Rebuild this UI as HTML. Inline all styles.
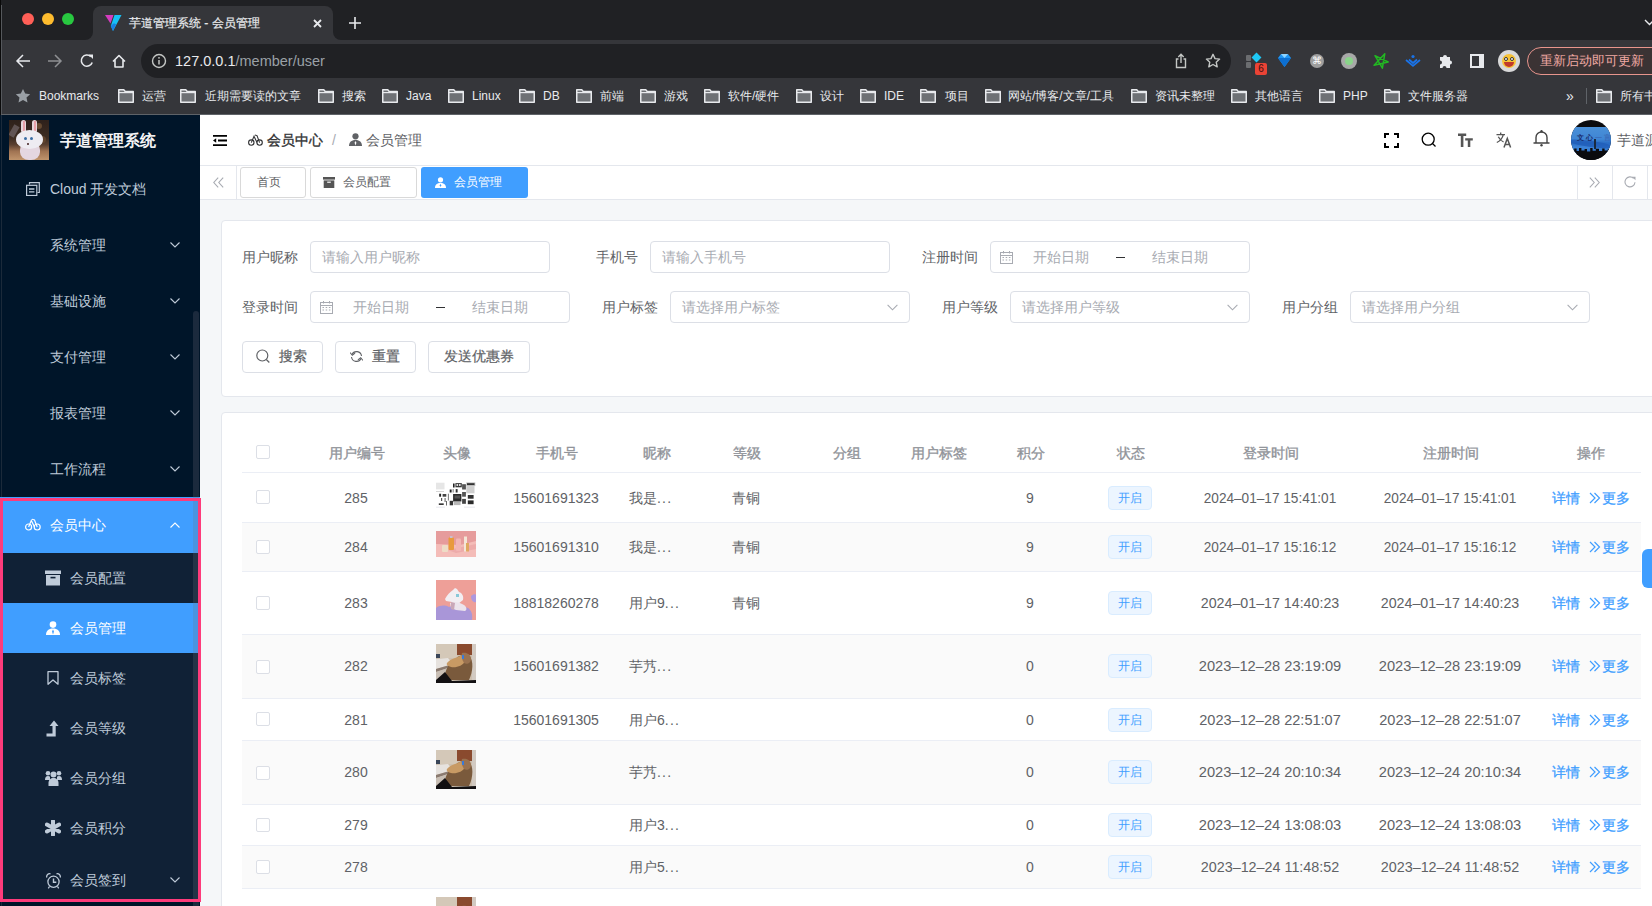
<!DOCTYPE html>
<html><head><meta charset="utf-8">
<style>
*{box-sizing:border-box;margin:0;padding:0}
html,body{width:1652px;height:906px;overflow:hidden;background:#f5f7f9;font-family:"Liberation Sans",sans-serif}
.a{position:absolute}
svg{display:block}
/* chrome */
#tabstrip{left:0;top:0;width:1652px;height:40px;background:#202124}
#toolbar{left:0;top:40px;width:1652px;height:75px;background:#35363a}
.tl{width:12px;height:12px;border-radius:50%;top:13px}
.bm{top:88px;height:16px;font-size:12px;line-height:16px;color:#e8eaed;white-space:nowrap}
.fold{top:89px;width:16px;height:14px}
/* sidebar */
#side{left:0;top:115px;width:200px;height:791px;background:#001529;overflow:hidden}
.mi{left:0;width:200px;font-size:14px;color:#bfcbd9;white-space:nowrap}
.mt{position:absolute;top:0;line-height:56px}
.chev{position:absolute;width:10px;height:6px}
/* header */
#hdr{left:200px;top:115px;width:1452px;height:51px;background:#fff;border-bottom:1px solid #eee}
#tags{left:200px;top:166px;width:1452px;height:34px;background:#fff;border-bottom:1px solid #e4e7ed}
.card{background:#fff;border:1px solid #e4e7ed;border-radius:4px}
.lbl{font-size:14px;color:#606266;line-height:32px;height:32px;text-align:right;white-space:nowrap}
.inp{height:32px;border:1px solid #dcdfe6;border-radius:4px;background:#fff;font-size:14px;color:#a8abb2;line-height:30px;white-space:nowrap}
.btn{height:32px;border:1px solid #dcdfe6;border-radius:4px;background:#fff;font-size:14px;color:#606266;line-height:30px;white-space:nowrap}
.th{font-size:14px;color:#909399;-webkit-text-stroke:0.35px #909399;line-height:20px;white-space:nowrap}
.td{font-size:14px;color:#606266;line-height:20px;white-space:nowrap}
.cb{width:14px;height:14px;border:1px solid #dcdfe6;border-radius:2px;background:#fff}
.tag{width:44px;height:24px;border:1px solid #d9ecff;background:#ecf5ff;border-radius:4px;color:#409eff;font-size:12px;line-height:22px;text-align:center}
.lnk{font-size:14px;color:#409eff;-webkit-text-stroke:0.25px #409eff;line-height:20px;white-space:nowrap}
</style></head>
<body>
<!-- ============ BROWSER CHROME ============ -->
<div id="tabstrip" class="a"></div>
<div class="a tl" style="left:22px;background:#ff5f57"></div>
<div class="a tl" style="left:42px;background:#febc2e"></div>
<div class="a tl" style="left:62px;background:#28c840"></div>
<!-- active tab -->
<div class="a" style="left:93px;top:6px;width:240px;height:40px;background:#35363a;border-radius:8px 8px 0 0"></div>
<div class="a" style="left:85px;top:32px;width:8px;height:8px;background:#35363a"></div>
<div class="a" style="left:77px;top:24px;width:16px;height:16px;background:#202124;border-radius:0 0 8px 0"></div>
<div class="a" style="left:333px;top:32px;width:8px;height:8px;background:#35363a"></div>
<div class="a" style="left:333px;top:24px;width:16px;height:16px;background:#202124;border-radius:0 0 0 8px"></div>
<svg class="a" style="left:104px;top:14px" width="18" height="18" viewBox="0 0 18 18"><path d="M1 1h8.5L6.5 9.5z" fill="#d43cbf"/><path d="M10.5 1h7L9 17 6.8 12z" fill="#16c0f5"/><path d="M6.8 12L9 17l3.2-6.8-2.4-1z" fill="#1a7fe0"/></svg>
<div class="a" style="left:129px;top:15px;font-size:12px;line-height:16px;color:#e8eaed;-webkit-text-stroke:0.2px #e8eaed;white-space:nowrap">芋道管理系统 - 会员管理</div>
<svg class="a" style="left:313px;top:19px" width="9" height="9" viewBox="0 0 9 9"><path d="M1 1L8 8M8 1L1 8" stroke="#e8eaed" stroke-width="1.8"/></svg>
<svg class="a" style="left:349px;top:17px" width="12" height="12" viewBox="0 0 12 12"><path d="M6 0V12M0 6H12" stroke="#e8eaed" stroke-width="1.6"/></svg>
<svg class="a" style="left:1644px;top:19px" width="10" height="7" viewBox="0 0 10 7"><path d="M1 1l4.5 4.5L10 1" stroke="#e8eaed" stroke-width="1.4" fill="none"/></svg>
<div id="toolbar" class="a"></div>
<!-- nav icons -->
<svg class="a" style="left:15px;top:53px" width="16" height="16" viewBox="0 0 16 16"><path d="M15 8H2M8 2L2 8l6 6" stroke="#e8eaed" stroke-width="1.5" fill="none"/></svg>
<svg class="a" style="left:47px;top:53px" width="16" height="16" viewBox="0 0 16 16"><path d="M1 8h13M8 2l6 6-6 6" stroke="#8e9093" stroke-width="1.5" fill="none"/></svg>
<svg class="a" style="left:79px;top:53px" width="16" height="16" viewBox="0 0 16 16"><path d="M13.2 9.5A5.6 5.6 0 1 1 11.8 3.6" stroke="#e8eaed" stroke-width="1.6" fill="none"/><path d="M9.5 1.5h4.5v4.5z" fill="#e8eaed"/></svg>
<svg class="a" style="left:111px;top:53px" width="16" height="16" viewBox="0 0 16 16"><path d="M2 8.5L8 2.5l6 6M4 7v7h8V7" stroke="#e8eaed" stroke-width="1.6" fill="none" stroke-linejoin="round"/></svg>
<!-- omnibox -->
<div class="a" style="left:141px;top:44px;width:1090px;height:34px;border-radius:17px;background:#202124"></div>
<svg class="a" style="left:151px;top:53px" width="16" height="16" viewBox="0 0 16 16"><circle cx="8" cy="8" r="6.5" stroke="#c4c7c5" stroke-width="1.4" fill="none"/><path d="M8 7v4.5" stroke="#c4c7c5" stroke-width="1.5"/><circle cx="8" cy="4.8" r="0.9" fill="#c4c7c5"/></svg>
<div class="a" style="left:175px;top:52px;font-size:14.5px;line-height:18px;color:#e8eaed;white-space:nowrap">127.0.0.1<span style="color:#9aa0a6">/member/user</span></div>
<svg class="a" style="left:1174px;top:53px" width="14" height="16" viewBox="0 0 14 16"><path d="M4.5 6H2.5v8.5h9V6h-2M7 10V1.5M4.3 4L7 1.3 9.7 4" stroke="#c4c7c5" stroke-width="1.4" fill="none"/></svg>
<svg class="a" style="left:1205px;top:53px" width="16" height="16" viewBox="0 0 16 16"><path d="M8 1.3l2 4.3 4.6.5-3.4 3.1 1 4.6L8 11.5l-4.2 2.3 1-4.6L1.4 6.1 6 5.6z" stroke="#c4c7c5" stroke-width="1.4" fill="none" stroke-linejoin="round"/></svg>
<!-- extensions -->
<div class="a" style="left:1246px;top:55px;width:5px;height:6px;background:#6b6d70;border-radius:1px"></div>
<div class="a" style="left:1246px;top:62px;width:5px;height:6px;background:#6b6d70;border-radius:1px"></div>
<div class="a" style="left:1253px;top:54px;width:7px;height:7px;background:#1ec8f5;transform:rotate(45deg)"></div>
<div class="a" style="left:1255px;top:63px;width:12px;height:12px;background:#ea4335;border-radius:2px;color:#3a1010;font-size:10px;line-height:12px;text-align:center">6</div>
<svg class="a" style="left:1277px;top:53px" width="15" height="15" viewBox="0 0 15 15"><path d="M1 5l3-4h7l3 4-6.5 9z" fill="#2196f3"/><path d="M1 5h13l-6.5 9z" fill="#0d6fd1"/><path d="M4 1l3.5 4L11 1" fill="#8fd4ff"/></svg>
<div class="a" style="left:1310px;top:54px;width:14px;height:14px;border-radius:50%;background:#9e9e9e;color:#fff;font-size:10px;line-height:14px;text-align:center">⌘</div>
<div class="a" style="left:1341px;top:53px;width:16px;height:16px;border-radius:50%;background:#a8a8a8"></div>
<div class="a" style="left:1345px;top:57px;width:8px;height:8px;border-radius:50%;background:#8ad48a"></div>
<svg class="a" style="left:1373px;top:52px" width="17" height="18" viewBox="0 0 17 18"><path d="M11.8 1.7L9.4 16.2 2 3.7 15.2 10 1.1 13.3z" stroke="#22b822" stroke-width="1.5" fill="none" stroke-linejoin="round"/></svg>
<svg class="a" style="left:1405px;top:54px" width="16" height="14" viewBox="0 0 16 14"><path d="M1 6l7 6 7-6M4 5.5l4 3.5 4-3.5" stroke="#1a73e8" stroke-width="1.7" fill="none"/><circle cx="8" cy="2.5" r="1.6" fill="#1a73e8"/></svg>
<svg class="a" style="left:1437px;top:53px" width="16" height="16" viewBox="0 0 16 16"><path d="M3 4h3a2 2 0 1 1 4 0h3v3.5a2 2 0 1 1 0 4V15H9.5a2 2 0 1 0-4 0H3v-3.5a2 2 0 1 0 0-4z" fill="#e8eaed"/></svg>
<div class="a" style="left:1470px;top:54px;width:14px;height:14px;border:2px solid #e8eaed;border-right-width:5px"></div>
<div class="a" style="left:1498px;top:50px;width:22px;height:22px;border-radius:50%;background:#d9d9d9"></div>
<div class="a" style="left:1502px;top:54px;width:14px;height:14px;border-radius:50%;background:#f7c236"></div>
<div class="a" style="left:1504px;top:62px;width:10px;height:5px;border-radius:0 0 5px 5px;background:#c0392b"></div><div class="a" style="left:1504px;top:57px;width:4px;height:4px;border-radius:50%;background:#fff;border:1px solid #333"></div><div class="a" style="left:1510px;top:57px;width:4px;height:4px;border-radius:50%;background:#fff;border:1px solid #333"></div>
<div class="a" style="left:1527px;top:47px;width:140px;height:28px;border:1.5px solid #e8958d;border-radius:14px;background:#3b3334"></div>
<div class="a" style="left:1540px;top:52px;font-size:13px;line-height:18px;color:#f2aaa4;white-space:nowrap">重新启动即可更新</div>
<!-- bookmarks bar -->
<svg class="a" style="left:15px;top:88px" width="16" height="16" viewBox="0 0 16 16"><path d="M8 1l2.2 4.6 5 .6-3.7 3.4 1 5L8 12.1l-4.5 2.5 1-5L.8 6.2l5-.6z" fill="#9aa0a6"/></svg>
<div class="a bm" style="left:39px">Bookmarks</div>
<svg class="a fold" style="left:118px" width="16" height="14" viewBox="0 0 16 14"><path d="M0.75 0.75h5l1.5 1.8h8v10.7H0.75z" fill="#6e7175" stroke="#e8eaed" stroke-width="1.5" stroke-linejoin="round"/><path d="M0.75 3.6h14.5" stroke="#e8eaed" stroke-width="1.2"/></svg>
<div class="a bm" style="left:142px">运营</div>
<svg class="a fold" style="left:180px" width="16" height="14" viewBox="0 0 16 14"><path d="M0.75 0.75h5l1.5 1.8h8v10.7H0.75z" fill="#6e7175" stroke="#e8eaed" stroke-width="1.5" stroke-linejoin="round"/><path d="M0.75 3.6h14.5" stroke="#e8eaed" stroke-width="1.2"/></svg>
<div class="a bm" style="left:205px">近期需要读的文章</div>
<svg class="a fold" style="left:318px" width="16" height="14" viewBox="0 0 16 14"><path d="M0.75 0.75h5l1.5 1.8h8v10.7H0.75z" fill="#6e7175" stroke="#e8eaed" stroke-width="1.5" stroke-linejoin="round"/><path d="M0.75 3.6h14.5" stroke="#e8eaed" stroke-width="1.2"/></svg>
<div class="a bm" style="left:342px">搜索</div>
<svg class="a fold" style="left:382px" width="16" height="14" viewBox="0 0 16 14"><path d="M0.75 0.75h5l1.5 1.8h8v10.7H0.75z" fill="#6e7175" stroke="#e8eaed" stroke-width="1.5" stroke-linejoin="round"/><path d="M0.75 3.6h14.5" stroke="#e8eaed" stroke-width="1.2"/></svg>
<div class="a bm" style="left:406px">Java</div>
<svg class="a fold" style="left:448px" width="16" height="14" viewBox="0 0 16 14"><path d="M0.75 0.75h5l1.5 1.8h8v10.7H0.75z" fill="#6e7175" stroke="#e8eaed" stroke-width="1.5" stroke-linejoin="round"/><path d="M0.75 3.6h14.5" stroke="#e8eaed" stroke-width="1.2"/></svg>
<div class="a bm" style="left:472px">Linux</div>
<svg class="a fold" style="left:519px" width="16" height="14" viewBox="0 0 16 14"><path d="M0.75 0.75h5l1.5 1.8h8v10.7H0.75z" fill="#6e7175" stroke="#e8eaed" stroke-width="1.5" stroke-linejoin="round"/><path d="M0.75 3.6h14.5" stroke="#e8eaed" stroke-width="1.2"/></svg>
<div class="a bm" style="left:543px">DB</div>
<svg class="a fold" style="left:576px" width="16" height="14" viewBox="0 0 16 14"><path d="M0.75 0.75h5l1.5 1.8h8v10.7H0.75z" fill="#6e7175" stroke="#e8eaed" stroke-width="1.5" stroke-linejoin="round"/><path d="M0.75 3.6h14.5" stroke="#e8eaed" stroke-width="1.2"/></svg>
<div class="a bm" style="left:600px">前端</div>
<svg class="a fold" style="left:640px" width="16" height="14" viewBox="0 0 16 14"><path d="M0.75 0.75h5l1.5 1.8h8v10.7H0.75z" fill="#6e7175" stroke="#e8eaed" stroke-width="1.5" stroke-linejoin="round"/><path d="M0.75 3.6h14.5" stroke="#e8eaed" stroke-width="1.2"/></svg>
<div class="a bm" style="left:664px">游戏</div>
<svg class="a fold" style="left:704px" width="16" height="14" viewBox="0 0 16 14"><path d="M0.75 0.75h5l1.5 1.8h8v10.7H0.75z" fill="#6e7175" stroke="#e8eaed" stroke-width="1.5" stroke-linejoin="round"/><path d="M0.75 3.6h14.5" stroke="#e8eaed" stroke-width="1.2"/></svg>
<div class="a bm" style="left:728px">软件/硬件</div>
<svg class="a fold" style="left:796px" width="16" height="14" viewBox="0 0 16 14"><path d="M0.75 0.75h5l1.5 1.8h8v10.7H0.75z" fill="#6e7175" stroke="#e8eaed" stroke-width="1.5" stroke-linejoin="round"/><path d="M0.75 3.6h14.5" stroke="#e8eaed" stroke-width="1.2"/></svg>
<div class="a bm" style="left:820px">设计</div>
<svg class="a fold" style="left:860px" width="16" height="14" viewBox="0 0 16 14"><path d="M0.75 0.75h5l1.5 1.8h8v10.7H0.75z" fill="#6e7175" stroke="#e8eaed" stroke-width="1.5" stroke-linejoin="round"/><path d="M0.75 3.6h14.5" stroke="#e8eaed" stroke-width="1.2"/></svg>
<div class="a bm" style="left:884px">IDE</div>
<svg class="a fold" style="left:920px" width="16" height="14" viewBox="0 0 16 14"><path d="M0.75 0.75h5l1.5 1.8h8v10.7H0.75z" fill="#6e7175" stroke="#e8eaed" stroke-width="1.5" stroke-linejoin="round"/><path d="M0.75 3.6h14.5" stroke="#e8eaed" stroke-width="1.2"/></svg>
<div class="a bm" style="left:945px">项目</div>
<svg class="a fold" style="left:985px" width="16" height="14" viewBox="0 0 16 14"><path d="M0.75 0.75h5l1.5 1.8h8v10.7H0.75z" fill="#6e7175" stroke="#e8eaed" stroke-width="1.5" stroke-linejoin="round"/><path d="M0.75 3.6h14.5" stroke="#e8eaed" stroke-width="1.2"/></svg>
<div class="a bm" style="left:1008px">网站/博客/文章/工具</div>
<svg class="a fold" style="left:1131px" width="16" height="14" viewBox="0 0 16 14"><path d="M0.75 0.75h5l1.5 1.8h8v10.7H0.75z" fill="#6e7175" stroke="#e8eaed" stroke-width="1.5" stroke-linejoin="round"/><path d="M0.75 3.6h14.5" stroke="#e8eaed" stroke-width="1.2"/></svg>
<div class="a bm" style="left:1155px">资讯未整理</div>
<svg class="a fold" style="left:1231px" width="16" height="14" viewBox="0 0 16 14"><path d="M0.75 0.75h5l1.5 1.8h8v10.7H0.75z" fill="#6e7175" stroke="#e8eaed" stroke-width="1.5" stroke-linejoin="round"/><path d="M0.75 3.6h14.5" stroke="#e8eaed" stroke-width="1.2"/></svg>
<div class="a bm" style="left:1255px">其他语言</div>
<svg class="a fold" style="left:1319px" width="16" height="14" viewBox="0 0 16 14"><path d="M0.75 0.75h5l1.5 1.8h8v10.7H0.75z" fill="#6e7175" stroke="#e8eaed" stroke-width="1.5" stroke-linejoin="round"/><path d="M0.75 3.6h14.5" stroke="#e8eaed" stroke-width="1.2"/></svg>
<div class="a bm" style="left:1343px">PHP</div>
<svg class="a fold" style="left:1384px" width="16" height="14" viewBox="0 0 16 14"><path d="M0.75 0.75h5l1.5 1.8h8v10.7H0.75z" fill="#6e7175" stroke="#e8eaed" stroke-width="1.5" stroke-linejoin="round"/><path d="M0.75 3.6h14.5" stroke="#e8eaed" stroke-width="1.2"/></svg>
<div class="a bm" style="left:1408px">文件服务器</div>
<svg class="a fold" style="left:1596px" width="16" height="14" viewBox="0 0 16 14"><path d="M0.75 0.75h5l1.5 1.8h8v10.7H0.75z" fill="#6e7175" stroke="#e8eaed" stroke-width="1.5" stroke-linejoin="round"/><path d="M0.75 3.6h14.5" stroke="#e8eaed" stroke-width="1.2"/></svg>
<div class="a bm" style="left:1620px">所有书签</div>
<div class="a bm" style="left:1566px;font-size:14px">»</div>
<div class="a" style="left:1586px;top:88px;width:1px;height:16px;background:#5f6368"></div>
<div class="a" style="left:0;top:114px;width:1652px;height:1px;background:#5f6368"></div>
<div class="a" style="left:0;top:0;width:1px;height:906px;background:#0a0a0a"></div>
<div class="a" style="left:1px;top:5px;width:1px;height:109px;background:#55585c"></div>

<!-- ============ SIDEBAR ============ -->
<div id="side" class="a"></div>
<div class="a" style="left:1px;top:115px;width:1px;height:791px;background:#1b2a3a"></div>
<!-- logo -->
<div class="a" style="left:9px;top:120px;width:40px;height:40px;overflow:hidden;background:linear-gradient(180deg,#2e211b 0%,#3d2c22 45%,#5a4030 62%,#a07352 78%,#c0946c 100%)">
  <div class="a" style="left:27px;top:3px;width:6px;height:6px;border-radius:50%;background:#7a5a3a;opacity:.7"></div>
  <div class="a" style="left:30px;top:16px;width:7px;height:7px;border-radius:50%;background:#6a4a30;opacity:.7"></div>
  <div class="a" style="left:2px;top:5px;width:6px;height:12px;background:#8a8088;opacity:.5;transform:rotate(30deg)"></div>
  <div class="a" style="left:12px;top:0;width:5px;height:13px;border-radius:3px;background:#e6d6da"></div>
  <div class="a" style="left:23px;top:0;width:5px;height:13px;border-radius:3px;background:#e6d6da"></div>
  <div class="a" style="left:13.5px;top:1px;width:2px;height:10px;background:#e8a0a8"></div>
  <div class="a" style="left:24.5px;top:1px;width:2px;height:10px;background:#e8a0a8"></div>
  <div class="a" style="left:11px;top:22px;width:20px;height:18px;border-radius:45%;background:#e4d6e0"></div>
  <div class="a" style="left:7px;top:10px;width:27px;height:19px;border-radius:50%;background:#eeecf2"></div>
  <div class="a" style="left:15px;top:17px;width:3px;height:3px;border-radius:50%;background:#3b6ea5"></div>
  <div class="a" style="left:21px;top:17px;width:3px;height:3px;border-radius:50%;background:#3b6ea5"></div>
  <div class="a" style="left:18px;top:23px;width:2px;height:2px;border-radius:50%;background:#402020"></div>
</div>
<div class="a" style="left:60px;top:131px;font-size:16px;line-height:20px;-webkit-text-stroke:0.5px #fff;color:#fff;white-space:nowrap">芋道管理系统</div>
<!-- Cloud -->
<svg class="a" style="left:26px;top:182px" width="14" height="14" viewBox="0 0 14 14"><path d="M3.5 2.5V0.7h9.8v9.8h-1.8" stroke="#bfcbd9" stroke-width="1.2" fill="none"/><rect x="0.6" y="3.3" width="10.2" height="10.2" stroke="#bfcbd9" stroke-width="1.2" fill="none"/><path d="M3 7h5.4M3 9.8h5.4" stroke="#bfcbd9" stroke-width="1.3"/></svg>
<div class="a mi" style="left:50px;top:180px;line-height:18px">Cloud 开发文档</div>
<div class="a mi" style="left:50px;top:236px;line-height:18px">系统管理</div>
<svg class="a" style="left:170px;top:242px" width="10" height="6" viewBox="0 0 10 6"><path d="M0.5 0.5L5 5 9.5 0.5" stroke="#bfcbd9" stroke-width="1.1" fill="none"/></svg>
<div class="a mi" style="left:50px;top:292px;line-height:18px">基础设施</div>
<svg class="a" style="left:170px;top:298px" width="10" height="6" viewBox="0 0 10 6"><path d="M0.5 0.5L5 5 9.5 0.5" stroke="#bfcbd9" stroke-width="1.1" fill="none"/></svg>
<div class="a mi" style="left:50px;top:348px;line-height:18px">支付管理</div>
<svg class="a" style="left:170px;top:354px" width="10" height="6" viewBox="0 0 10 6"><path d="M0.5 0.5L5 5 9.5 0.5" stroke="#bfcbd9" stroke-width="1.1" fill="none"/></svg>
<div class="a mi" style="left:50px;top:404px;line-height:18px">报表管理</div>
<svg class="a" style="left:170px;top:410px" width="10" height="6" viewBox="0 0 10 6"><path d="M0.5 0.5L5 5 9.5 0.5" stroke="#bfcbd9" stroke-width="1.1" fill="none"/></svg>
<div class="a mi" style="left:50px;top:460px;line-height:18px">工作流程</div>
<svg class="a" style="left:170px;top:466px" width="10" height="6" viewBox="0 0 10 6"><path d="M0.5 0.5L5 5 9.5 0.5" stroke="#bfcbd9" stroke-width="1.1" fill="none"/></svg>

<!-- scrollbar thumb -->
<div class="a" style="left:193px;top:311px;width:6px;height:600px;border-radius:3px;background:#1b2a3d"></div>
<!-- member center -->
<div class="a" style="left:0;top:497px;width:200px;height:56px;background:#409eff"></div>
<div class="a" style="left:0;top:553px;width:200px;height:349px;background:#102136"></div>
<div class="a" style="left:193px;top:553px;width:6px;height:349px;background:#243447"></div>
<div class="a" style="left:0;top:603px;width:200px;height:50px;background:#409eff"></div>
<div class="a" style="left:193px;top:497px;width:6px;height:56px;background:#4a94e0"></div>
<div class="a" style="left:193px;top:603px;width:6px;height:50px;background:#4a94e0"></div>
<svg class="a" style="left:25px;top:518px" width="16" height="13" viewBox="0 0 16 13"><circle cx="3.6" cy="9" r="3" stroke="#fff" stroke-width="1.2" fill="none"/><circle cx="12.2" cy="9" r="3" stroke="#fff" stroke-width="1.2" fill="none"/><path d="M3.6 9L6.3 2.5 9.5 9M12.2 9L9.5 2 7 1.2" stroke="#fff" stroke-width="1.2" fill="none"/></svg>
<div class="a mi" style="left:50px;top:516px;line-height:18px;color:#fff">会员中心</div>
<svg class="a" style="left:170px;top:522px" width="10" height="6" viewBox="0 0 10 6"><path d="M0.5 5.5L5 1 9.5 5.5" stroke="#fff" stroke-width="1.1" fill="none"/></svg>
<!-- sub items -->
<svg class="a" style="left:45px;top:570px" width="16" height="16" viewBox="0 0 16 16"><rect x="0" y="0.5" width="16" height="3.5" fill="#bfcbd9"/><path d="M1 5h14v10.5H1z" fill="#bfcbd9"/><rect x="5.5" y="6.8" width="5" height="1.6" fill="#102136"/></svg>
<div class="a mi" style="left:70px;top:569px;line-height:18px">会员配置</div>
<svg class="a" style="left:46px;top:621px" width="14" height="14" viewBox="0 0 14 14"><circle cx="7" cy="3.6" r="3.3" fill="#fff"/><path d="M0 14c0-4 2.5-6.5 7-6.5s7 2.5 7 6.5z" fill="#fff"/><path d="M7 8.5l-1 2 1 3 1-3z" fill="#409eff"/></svg>
<div class="a mi" style="left:70px;top:619px;line-height:18px;color:#fff">会员管理</div>
<svg class="a" style="left:47px;top:671px" width="12" height="14" viewBox="0 0 12 14"><path d="M1 0.7h10v12.5L6 9 1 13.2z" stroke="#bfcbd9" stroke-width="1.3" fill="none" stroke-linejoin="round"/></svg>
<div class="a mi" style="left:70px;top:669px;line-height:18px">会员标签</div>
<svg class="a" style="left:46px;top:720px" width="14" height="17" viewBox="0 0 14 17"><path d="M8 0.5L12.5 6H9.7v10.5H0.5v-3h6V6H3.5z" fill="#bfcbd9"/></svg>
<div class="a mi" style="left:70px;top:719px;line-height:18px">会员等级</div>
<svg class="a" style="left:45px;top:770px" width="17" height="16" viewBox="0 0 17 16"><circle cx="3" cy="3.3" r="2.3" fill="#bfcbd9"/><circle cx="14" cy="3.3" r="2.3" fill="#bfcbd9"/><circle cx="8.5" cy="4.5" r="3" fill="#bfcbd9"/><path d="M0 10c0-2.5 1-4 3-4s2 1 2 1v3z M17 10c0-2.5-1-4-3-4s-2 1-2 1v3z" fill="#bfcbd9"/><path d="M3.5 16v-3c0-3 2-5 5-5s5 2 5 5v3z" fill="#bfcbd9"/></svg>
<div class="a mi" style="left:70px;top:769px;line-height:18px">会员分组</div>
<svg class="a" style="left:45px;top:820px" width="16" height="16" viewBox="0 0 16 16"><path d="M8 1v14M1.9 4.5l12.2 7M1.9 11.5l12.2-7" stroke="#bfcbd9" stroke-width="4" stroke-linecap="round"/></svg>
<div class="a mi" style="left:70px;top:819px;line-height:18px">会员积分</div>
<svg class="a" style="left:46px;top:873px" width="15" height="16" viewBox="0 0 15 16"><circle cx="7.5" cy="8.8" r="5.6" stroke="#bfcbd9" stroke-width="1.3" fill="none"/><path d="M7.5 5.5v3.8h2.8" stroke="#bfcbd9" stroke-width="1.4" fill="none"/><path d="M0.8 4.5A3 3 0 0 1 4.5 0.8M14.2 4.5A3 3 0 0 0 10.5 0.8M3.5 13.5L2.3 15.3M11.5 13.5l1.2 1.8" stroke="#bfcbd9" stroke-width="1.3" fill="none"/></svg>
<div class="a mi" style="left:70px;top:871px;line-height:18px">会员签到</div>
<svg class="a" style="left:170px;top:877px" width="10" height="6" viewBox="0 0 10 6"><path d="M0.5 0.5L5 5 9.5 0.5" stroke="#bfcbd9" stroke-width="1.1" fill="none"/></svg>
<!-- pink annotation box -->
<div class="a" style="left:0;top:498px;width:201px;height:404px;border:3px solid #fe3b7b"></div>

<!-- ============ HEADER ============ -->
<div id="hdr" class="a"></div>
<svg class="a" style="left:213px;top:135px" width="14" height="11" viewBox="0 0 14 11"><path d="M0 0.9h14M5 5.5h9M0 10.1h14" stroke="#000" stroke-width="1.8"/><path d="M0 5.5L3.2 3.2v4.6z" fill="#000"/></svg>
<svg class="a" style="left:248px;top:134px" width="15" height="12" viewBox="0 0 15 12"><circle cx="3.3" cy="8.6" r="2.7" stroke="#303133" stroke-width="1.1" fill="none"/><circle cx="11.6" cy="8.6" r="2.7" stroke="#303133" stroke-width="1.1" fill="none"/><path d="M3.3 8.6L6 2.3 9 8.6M11.6 8.6L9 1.6 6.8 0.9" stroke="#303133" stroke-width="1.1" fill="none"/></svg>
<div class="a" style="left:267px;top:131px;font-size:14px;line-height:18px;-webkit-text-stroke:0.35px #303133;color:#303133;white-space:nowrap">会员中心</div>
<div class="a" style="left:332px;top:131px;font-size:14px;line-height:18px;color:#a8abb2">/</div>
<svg class="a" style="left:349px;top:133px" width="13" height="13" viewBox="0 0 13 13"><circle cx="6.5" cy="3.3" r="3.1" fill="#606266"/><path d="M0 13c0-3.8 2.3-6 6.5-6s6.5 2.2 6.5 6z" fill="#606266"/><path d="M6.5 8l-.9 1.8.9 2.6.9-2.6z" fill="#fff"/></svg>
<div class="a" style="left:366px;top:131px;font-size:14px;line-height:18px;color:#606266;white-space:nowrap">会员管理</div>
<!-- right tools -->
<svg class="a" style="left:1384px;top:133px" width="15" height="15" viewBox="0 0 15 15"><path d="M1 5V1h4M10 1h4v4M14 10v4h-4M5 14H1v-4" stroke="#000" stroke-width="2" fill="none"/></svg>
<svg class="a" style="left:1421px;top:132px" width="16" height="16" viewBox="0 0 16 16"><circle cx="7.2" cy="7.2" r="6" stroke="#000" stroke-width="1.3" fill="none"/><path d="M11.5 11.5L14.5 14.5" stroke="#000" stroke-width="1.3"/></svg>
<svg class="a" style="left:1458px;top:133px" width="15" height="14" viewBox="0 0 15 14"><path d="M0 0.5h8.2v2.4H5.4V14H2.8V2.9H0z" fill="#555"/><path d="M7.2 5.2h7.6v2.2h-2.5V14H9.8V7.4H7.2z" fill="#555"/></svg>
<svg class="a" style="left:1496px;top:132px" width="16" height="16" viewBox="0 0 16 16"><path d="M0.5 2.6h8.5M4.7 0.5v2.1M7.3 2.6C6.5 6 4 9 0.8 10.5M2.3 4.8c1.3 2.6 3.3 4.4 5.3 5.2" stroke="#555" stroke-width="1.3" fill="none"/><path d="M8 15.5L11.3 6.5 14.6 15.5M9.2 12.5h4.2" stroke="#555" stroke-width="1.5" fill="none"/></svg>
<svg class="a" style="left:1533px;top:130px" width="17" height="17" viewBox="0 0 17 17"><path d="M3 12.5V7.5a5.5 5.5 0 0 1 11 0v5M0.5 13h16" stroke="#444" stroke-width="1.4" fill="none"/><circle cx="8.5" cy="1.3" r="1.2" fill="#444"/><circle cx="8.5" cy="15.3" r="1.2" fill="#444"/></svg>
<div class="a" style="left:1571px;top:120px;width:40px;height:40px;border-radius:50%;overflow:hidden;background:#0b0b0e">
  <div class="a" style="left:0;top:7px;width:40px;height:27px;background:linear-gradient(180deg,#4a90d8 0%,#3f86d4 45%,#2a6cc4 60%,#3c84d8 75%,#2e70c8 100%)"></div>
  <div class="a" style="left:-4px;top:21px;width:48px;height:6px;border-radius:50%;background:#1f5cb8;opacity:.8;transform:rotate(8deg)"></div>
  <div class="a" style="left:23px;top:19px;width:2px;height:10px;background:#1a2a40"></div>
  <div class="a" style="left:0;top:28px;width:40px;height:12px;background:#0b0b0e;clip-path:polygon(0 20%,8% 20%,8% 5%,14% 5%,14% 25%,20% 25%,20% 0,26% 0,26% 20%,34% 20%,34% 8%,40% 8%,40% 30%,48% 30%,48% 0,54% 0,54% 22%,62% 22%,62% 6%,70% 6%,70% 24%,78% 24%,78% 4%,84% 4%,84% 20%,92% 20%,92% 8%,100% 8%,100% 100%,0 100%)"></div>
  <div class="a" style="left:6px;top:14px;font-size:7px;line-height:8px;color:#1a2a6a;font-weight:bold;white-space:nowrap">文 心 <span style="color:#3a6ab8">一 言</span></div>
</div>
<div class="a" style="left:1617px;top:131px;font-size:14px;line-height:18px;color:#606266;white-space:nowrap">芋道源码</div>
<!-- ============ TAGS ============ -->
<div id="tags" class="a"></div>
<div class="a" style="left:200px;top:165px;width:1452px;height:1px;background:#e4e7ed"></div>
<svg class="a" style="left:213px;top:177px" width="11" height="11" viewBox="0 0 11 11"><path d="M5.2 0.7L0.8 5.5l4.4 4.8M10.2 0.7L5.8 5.5l4.4 4.8" stroke="#a8abb2" stroke-width="1.1" fill="none"/></svg>
<div class="a" style="left:236px;top:166px;width:1px;height:34px;background:#e4e7ed"></div>
<div class="a" style="left:240px;top:167px;width:66px;height:31px;border:1px solid #d9d9d9;border-radius:3px;background:#fff;font-size:12px;line-height:29px;color:#606266;padding-left:16px">首页</div>
<div class="a" style="left:310px;top:167px;width:107px;height:31px;border:1px solid #d9d9d9;border-radius:3px;background:#fff"></div>
<svg class="a" style="left:323px;top:177px" width="12" height="11" viewBox="0 0 12 11"><rect x="0" y="0" width="12" height="2.6" fill="#555"/><path d="M0.7 3.4h10.6V11H0.7z" fill="#555"/><rect x="4.2" y="4.6" width="3.6" height="1.2" fill="#fff"/></svg>
<div class="a" style="left:343px;top:174px;font-size:12px;line-height:16px;color:#606266;white-space:nowrap">会员配置</div>
<div class="a" style="left:421px;top:167px;width:107px;height:31px;border-radius:3px;background:#409eff"></div>
<svg class="a" style="left:435px;top:177px" width="11" height="11" viewBox="0 0 11 11"><circle cx="5.5" cy="2.8" r="2.6" fill="#fff"/><path d="M0 11c0-3.2 2-5 5.5-5s5.5 1.8 5.5 5z" fill="#fff"/><path d="M5.5 6.8l-.7 1.4.7 2 .7-2z" fill="#409eff"/></svg>
<div class="a" style="left:454px;top:174px;font-size:12px;line-height:16px;color:#fff;white-space:nowrap">会员管理</div>
<div class="a" style="left:1577px;top:166px;width:1px;height:34px;background:#e4e7ed"></div>
<div class="a" style="left:1612px;top:166px;width:1px;height:34px;background:#e4e7ed"></div>
<div class="a" style="left:1647px;top:166px;width:1px;height:34px;background:#e4e7ed"></div>
<svg class="a" style="left:1589px;top:177px" width="11" height="11" viewBox="0 0 11 11"><path d="M0.8 0.7l4.4 4.8-4.4 4.8M5.8 0.7l4.4 4.8-4.4 4.8" stroke="#a8abb2" stroke-width="1.1" fill="none"/></svg>
<svg class="a" style="left:1624px;top:176px" width="12" height="12" viewBox="0 0 12 12"><path d="M11 6.3A5 5 0 1 1 9.6 2.4" stroke="#a8abb2" stroke-width="1.1" fill="none"/><path d="M8 0.8h3.5v3.5z" fill="#a8abb2"/></svg>
<!-- ============ SEARCH CARD ============ -->
<div class="a card" style="left:221px;top:220px;width:1460px;height:177px"></div>
<div class="a lbl" style="left:198px;top:241px;width:100px">用户昵称</div>
<div class="a inp" style="left:310px;top:241px;width:240px"></div>
<div class="a" style="left:322px;top:248px;font-size:14px;line-height:18px;color:#a8abb2;white-space:nowrap">请输入用户昵称</div>
<div class="a lbl" style="left:538px;top:241px;width:100px">手机号</div>
<div class="a inp" style="left:650px;top:241px;width:240px"></div>
<div class="a" style="left:662px;top:248px;font-size:14px;line-height:18px;color:#a8abb2;white-space:nowrap">请输入手机号</div>
<div class="a lbl" style="left:878px;top:241px;width:100px">注册时间</div>
<div class="a inp" style="left:990px;top:241px;width:260px"></div>
<svg class="a" style="left:1000px;top:251px" width="13" height="13" viewBox="0 0 13 13"><rect x="0.5" y="1.5" width="12" height="11" stroke="#a8abb2" stroke-width="1" fill="none"/><path d="M0.5 4.5h12M3.5 0v2.5M9.5 0v2.5" stroke="#a8abb2" stroke-width="1"/><path d="M2.5 6.5h1.5M5.7 6.5h1.5M8.9 6.5h1.5M2.5 9h1.5M5.7 9h1.5M8.9 9h1.5" stroke="#a8abb2" stroke-width="1"/></svg>
<div class="a" style="left:1033px;top:248px;font-size:14px;line-height:18px;color:#a8abb2;white-space:nowrap">开始日期</div>
<div class="a" style="left:1116px;top:257px;width:9px;height:1.3px;background:#303133"></div>
<div class="a" style="left:1152px;top:248px;font-size:14px;line-height:18px;color:#a8abb2;white-space:nowrap">结束日期</div>
<div class="a lbl" style="left:198px;top:291px;width:100px">登录时间</div>
<div class="a inp" style="left:310px;top:291px;width:260px"></div>
<svg class="a" style="left:320px;top:301px" width="13" height="13" viewBox="0 0 13 13"><rect x="0.5" y="1.5" width="12" height="11" stroke="#a8abb2" stroke-width="1" fill="none"/><path d="M0.5 4.5h12M3.5 0v2.5M9.5 0v2.5" stroke="#a8abb2" stroke-width="1"/><path d="M2.5 6.5h1.5M5.7 6.5h1.5M8.9 6.5h1.5M2.5 9h1.5M5.7 9h1.5M8.9 9h1.5" stroke="#a8abb2" stroke-width="1"/></svg>
<div class="a" style="left:353px;top:298px;font-size:14px;line-height:18px;color:#a8abb2;white-space:nowrap">开始日期</div>
<div class="a" style="left:436px;top:307px;width:9px;height:1.3px;background:#303133"></div>
<div class="a" style="left:472px;top:298px;font-size:14px;line-height:18px;color:#a8abb2;white-space:nowrap">结束日期</div>
<div class="a lbl" style="left:558px;top:291px;width:100px">用户标签</div>
<div class="a inp" style="left:670px;top:291px;width:240px"></div>
<div class="a" style="left:682px;top:298px;font-size:14px;line-height:18px;color:#a8abb2;white-space:nowrap">请选择用户标签</div>
<svg class="a" style="left:887px;top:304px" width="11" height="7" viewBox="0 0 11 7"><path d="M0.6 0.8L5.5 5.8 10.4 0.8" stroke="#a8abb2" stroke-width="1.1" fill="none"/></svg>
<div class="a lbl" style="left:898px;top:291px;width:100px">用户等级</div>
<div class="a inp" style="left:1010px;top:291px;width:240px"></div>
<div class="a" style="left:1022px;top:298px;font-size:14px;line-height:18px;color:#a8abb2;white-space:nowrap">请选择用户等级</div>
<svg class="a" style="left:1227px;top:304px" width="11" height="7" viewBox="0 0 11 7"><path d="M0.6 0.8L5.5 5.8 10.4 0.8" stroke="#a8abb2" stroke-width="1.1" fill="none"/></svg>
<div class="a lbl" style="left:1238px;top:291px;width:100px">用户分组</div>
<div class="a inp" style="left:1350px;top:291px;width:240px"></div>
<div class="a" style="left:1362px;top:298px;font-size:14px;line-height:18px;color:#a8abb2;white-space:nowrap">请选择用户分组</div>
<svg class="a" style="left:1567px;top:304px" width="11" height="7" viewBox="0 0 11 7"><path d="M0.6 0.8L5.5 5.8 10.4 0.8" stroke="#a8abb2" stroke-width="1.1" fill="none"/></svg>

<div class="a btn" style="left:242px;top:341px;width:81px"></div>
<svg class="a" style="left:256px;top:349px" width="14" height="15" viewBox="0 0 14 15"><circle cx="6.3" cy="6.5" r="5.5" stroke="#606266" stroke-width="1.2" fill="none"/><path d="M10.3 10.5L13.3 13.5" stroke="#606266" stroke-width="1.2"/></svg>
<div class="a" style="left:279px;top:347px;font-size:14px;line-height:18px;color:#606266;-webkit-text-stroke:0.2px #606266;white-space:nowrap">搜索</div>
<div class="a btn" style="left:335px;top:341px;width:81px"></div>
<svg class="a" style="left:350px;top:350px" width="13" height="13" viewBox="0 0 13 13"><path d="M1.5 7A5 5 0 0 0 11 8.5M11.5 6A5 5 0 0 0 2 4.5" stroke="#606266" stroke-width="1.1" fill="none"/><path d="M0 2.5l2.3 2.8 2.8-2.2M13 10.5l-2.3-2.8-2.8 2.2" stroke="#606266" stroke-width="1.1" fill="none"/></svg>
<div class="a" style="left:372px;top:347px;font-size:14px;line-height:18px;color:#606266;-webkit-text-stroke:0.2px #606266;white-space:nowrap">重置</div>
<div class="a btn" style="left:428px;top:341px;width:102px"></div>
<div class="a" style="left:444px;top:347px;font-size:14px;line-height:18px;color:#606266;-webkit-text-stroke:0.2px #606266;white-space:nowrap">发送优惠券</div>
<!-- ============ TABLE CARD ============ -->
<div class="a card" style="left:221px;top:412px;width:1460px;height:600px"></div>
<!-- table -->
<div class="a cb" style="left:256px;top:445px"></div>
<div class="a th" style="left:297px;top:443px;width:120px;text-align:center">用户编号</div>
<div class="a th" style="left:397px;top:443px;width:120px;text-align:center">头像</div>
<div class="a th" style="left:497px;top:443px;width:120px;text-align:center">手机号</div>
<div class="a th" style="left:597px;top:443px;width:120px;text-align:center">昵称</div>
<div class="a th" style="left:687px;top:443px;width:120px;text-align:center">等级</div>
<div class="a th" style="left:787px;top:443px;width:120px;text-align:center">分组</div>
<div class="a th" style="left:879px;top:443px;width:120px;text-align:center">用户标签</div>
<div class="a th" style="left:971px;top:443px;width:120px;text-align:center">积分</div>
<div class="a th" style="left:1071px;top:443px;width:120px;text-align:center">状态</div>
<div class="a th" style="left:1211px;top:443px;width:120px;text-align:center">登录时间</div>
<div class="a th" style="left:1391px;top:443px;width:120px;text-align:center">注册时间</div>
<div class="a th" style="left:1531px;top:443px;width:120px;text-align:center">操作</div>
<div class="a" style="left:242px;top:472px;width:1399px;height:1px;background:#ebeef5"></div>
<div class="a" style="left:242px;top:522px;width:1399px;height:1px;background:#ebeef5"></div>
<div class="a cb" style="left:256px;top:490px"></div>
<div class="a td" style="left:296px;top:488px;width:120px;text-align:center">285</div>
<svg class="a" style="left:436px;top:482px" width="40" height="26" viewBox="0 0 40 26"><rect x="0" y="0.7" width="8.5" height="6.7" fill="#e6e6e6"/><rect x="17" y="1.5" width="1.6" height="4" fill="#222"/><rect x="19.4" y="1.1" width="6.4" height="4.2" fill="#3a3a3a"/><rect x="20.5" y="2" width="1.6" height="2" fill="#ddd"/><rect x="23" y="2" width="1.6" height="2" fill="#ddd"/><rect x="26.1" y="2.2" width="3.8" height="5.3" fill="#555"/><rect x="30.3" y="0.4" width="9" height="3.7" fill="#bbb"/><rect x="31" y="1.2" width="7.5" height="1.8" fill="#333"/><rect x="30.3" y="4.1" width="8.2" height="7.2" fill="#cfcfcf"/><rect x="13.7" y="7.5" width="1.9" height="3" fill="#222"/><rect x="19.7" y="7.1" width="1.9" height="3.4" fill="#333"/><rect x="16.5" y="7" width="1.5" height="3.5" fill="#aaa"/><rect x="17.1" y="12" width="8.3" height="7.5" fill="#2a2a2a"/><rect x="18.5" y="13.5" width="5.5" height="3" fill="#555"/><rect x="26.1" y="10" width="3.8" height="4.7" fill="#555"/><rect x="26.1" y="16.9" width="3.8" height="4.9" fill="#444"/><rect x="31.8" y="13" width="5.8" height="3.7" fill="#333"/><rect x="31.8" y="18.4" width="5.8" height="3.8" fill="#2a2a2a"/><rect x="3.2" y="11.7" width="1.9" height="3" fill="#222"/><rect x="6.6" y="12" width="3.7" height="2.7" fill="#444"/><rect x="13.7" y="18.8" width="3.4" height="4.5" fill="#333"/><rect x="2.8" y="21.4" width="4.9" height="1.5" fill="#222"/><rect x="17.9" y="19.9" width="6.7" height="3.2" fill="#b8b8b8"/><rect x="10" y="19" width="0.8" height="4.5" fill="#444"/><rect x="11.9" y="11.7" width="0.8" height="6.8" fill="#555"/><rect x="0" y="9" width="8" height="0.8" fill="#ccc"/><rect x="5" y="16" width="1.2" height="3" fill="#555"/><rect x="8.5" y="16" width="1.2" height="4" fill="#777"/><rect x="0" y="24.8" width="9" height="0.6" fill="#d8d8e0"/><rect x="28" y="24.8" width="11" height="0.6" fill="#d8d8e0"/></svg>
<div class="a td" style="left:496px;top:488px;width:120px;text-align:center">15601691323</div>
<div class="a td" style="left:629px;top:488px">我是<span style="letter-spacing:1.2px">...</span></div>
<div class="a td" style="left:686px;top:488px;width:120px;text-align:center">青铜</div>
<div class="a td" style="left:970px;top:488px;width:120px;text-align:center">9</div>
<div class="a tag" style="left:1108px;top:486px">开启</div>
<div class="a td" style="left:1170px;top:488px;width:200px;text-align:center;transform:scaleX(0.972)">2024–01–17 15:41:01</div>
<div class="a td" style="left:1350px;top:488px;width:200px;text-align:center;transform:scaleX(0.972)">2024–01–17 15:41:01</div>
<div class="a lnk" style="left:1552px;top:488px">详情</div>
<svg class="a" style="left:1589px;top:492px" width="12" height="12" viewBox="0 0 12 12"><path d="M1 1l5 5-5 5M5.5 1l5 5-5 5" stroke="#409eff" stroke-width="1.2" fill="none"/></svg>
<div class="a lnk" style="left:1602px;top:488px">更多</div>
<div class="a" style="left:242px;top:523px;width:1399px;height:48px;background:#fafafa"></div>
<div class="a" style="left:242px;top:571px;width:1399px;height:1px;background:#ebeef5"></div>
<div class="a cb" style="left:256px;top:540px"></div>
<div class="a td" style="left:296px;top:537px;width:120px;text-align:center">284</div>
<svg class="a" style="left:436px;top:531px" width="40" height="26" viewBox="0 0 40 26"><rect width="40" height="26" fill="#f4bcb8"/><path d="M0 0H40V10L24 14 0 13z" fill="#e69c9c"/><path d="M12 19L40 13V18L20 22z" fill="#e8a0a0" opacity=".6"/><rect x="6" y="14" width="6" height="7" rx="1" fill="#eedcc6"/><rect x="12.5" y="6.5" width="5.5" height="12.5" rx="1" fill="#e89a3c"/><rect x="14" y="5" width="2.5" height="2" fill="#c8c0d0"/><rect x="20" y="7.5" width="5" height="12.5" rx="1" fill="#f2b6b4"/><rect x="28" y="5.5" width="3" height="15" fill="#f4e6d6"/><rect x="30" y="12" width="3" height="8.5" fill="#e0a860"/></svg>
<div class="a td" style="left:496px;top:537px;width:120px;text-align:center">15601691310</div>
<div class="a td" style="left:629px;top:537px">我是<span style="letter-spacing:1.2px">...</span></div>
<div class="a td" style="left:686px;top:537px;width:120px;text-align:center">青铜</div>
<div class="a td" style="left:970px;top:537px;width:120px;text-align:center">9</div>
<div class="a tag" style="left:1108px;top:535px">开启</div>
<div class="a td" style="left:1170px;top:537px;width:200px;text-align:center;transform:scaleX(0.972)">2024–01–17 15:16:12</div>
<div class="a td" style="left:1350px;top:537px;width:200px;text-align:center;transform:scaleX(0.972)">2024–01–17 15:16:12</div>
<div class="a lnk" style="left:1552px;top:537px">详情</div>
<svg class="a" style="left:1589px;top:541px" width="12" height="12" viewBox="0 0 12 12"><path d="M1 1l5 5-5 5M5.5 1l5 5-5 5" stroke="#409eff" stroke-width="1.2" fill="none"/></svg>
<div class="a lnk" style="left:1602px;top:537px">更多</div>
<div class="a" style="left:242px;top:634px;width:1399px;height:1px;background:#ebeef5"></div>
<div class="a cb" style="left:256px;top:596px"></div>
<div class="a td" style="left:296px;top:593px;width:120px;text-align:center">283</div>
<svg class="a" style="left:436px;top:580px" width="40" height="40" viewBox="0 0 40 40"><rect width="40" height="40" fill="#ee9f98"/><path d="M0 28C4 25 9 25 13 27C18 24 26 25 32 28C35 30 37 34 36 40H0z" fill="#a996d8"/><path d="M35 16C37 14 40 14 40 15V22C38 23 35 21 35 16z" fill="#ad98de"/><path d="M9 19C11 15 14 12 17 10L19 8 21 9 23 12C26 13 28 16 27 20L22 24 16 22 10 21z" fill="#f2eef2"/><path d="M14 23C18 21 23 22 28 25C31 27 31 30 29 31L20 30 15 28z" fill="#ece4ec"/><path d="M15 22L19 23 18 30 15 29z" fill="#c9a8b8"/><rect x="20" y="14" width="3" height="3" fill="#88c8d8"/></svg>
<div class="a td" style="left:496px;top:593px;width:120px;text-align:center">18818260278</div>
<div class="a td" style="left:629px;top:593px">用户9<span style="letter-spacing:1.2px">...</span></div>
<div class="a td" style="left:686px;top:593px;width:120px;text-align:center">青铜</div>
<div class="a td" style="left:970px;top:593px;width:120px;text-align:center">9</div>
<div class="a tag" style="left:1108px;top:591px">开启</div>
<div class="a td" style="left:1170px;top:593px;width:200px;text-align:center;transform:scaleX(1.016)">2024–01–17 14:40:23</div>
<div class="a td" style="left:1350px;top:593px;width:200px;text-align:center;transform:scaleX(1.016)">2024–01–17 14:40:23</div>
<div class="a lnk" style="left:1552px;top:593px">详情</div>
<svg class="a" style="left:1589px;top:597px" width="12" height="12" viewBox="0 0 12 12"><path d="M1 1l5 5-5 5M5.5 1l5 5-5 5" stroke="#409eff" stroke-width="1.2" fill="none"/></svg>
<div class="a lnk" style="left:1602px;top:593px">更多</div>
<div class="a" style="left:242px;top:635px;width:1399px;height:63px;background:#fafafa"></div>
<div class="a" style="left:242px;top:698px;width:1399px;height:1px;background:#ebeef5"></div>
<div class="a cb" style="left:256px;top:660px"></div>
<div class="a td" style="left:296px;top:656px;width:120px;text-align:center">282</div>
<svg class="a" style="left:436px;top:644px" width="40" height="39" viewBox="0 0 40 39"><rect width="40" height="39" fill="#cdbfae"/><rect x="0" y="0" width="21" height="14" fill="#d4c8b8"/><rect x="21" y="0" width="17" height="11" fill="#8a4a2e"/><rect x="36" y="0" width="4" height="39" fill="#d2cac2"/><rect x="0" y="10" width="4" height="4" fill="#3a4658"/><path d="M0 15L12 14 17 20 0 25z" fill="#e6e2de"/><path d="M0 25L17 20 18 22 0 28z" fill="#8a7a70"/><path d="M0 28L18 22 12 32 0 36z" fill="#c8beb4"/><path d="M9 36C8 28 12 20 18 16C22 12 28 9 33 12C38 16 37 28 33 36z" fill="#7a5a3c"/><path d="M11 19C14 15 20 14 24 12C27 10 30 12 29 17C27 22 20 24 15 23C12 22 10 21 11 19z" fill="#c89a64"/><path d="M26 9C30 8 35 10 35 15C35 19 31 21 28 19C26 16 25 12 26 9z" fill="#9a7250"/><rect x="26" y="11" width="2" height="4" fill="#3a7ad8"/><path d="M0 36L9 28 16 37 40 36 40 39 0 39z" fill="#121012"/></svg>
<div class="a td" style="left:496px;top:656px;width:120px;text-align:center">15601691382</div>
<div class="a td" style="left:629px;top:656px">芋艿<span style="letter-spacing:1.2px">...</span></div>
<div class="a td" style="left:970px;top:656px;width:120px;text-align:center">0</div>
<div class="a tag" style="left:1108px;top:654px">开启</div>
<div class="a td" style="left:1170px;top:656px;width:200px;text-align:center;transform:scaleX(1.046)">2023–12–28 23:19:09</div>
<div class="a td" style="left:1350px;top:656px;width:200px;text-align:center;transform:scaleX(1.046)">2023–12–28 23:19:09</div>
<div class="a lnk" style="left:1552px;top:656px">详情</div>
<svg class="a" style="left:1589px;top:660px" width="12" height="12" viewBox="0 0 12 12"><path d="M1 1l5 5-5 5M5.5 1l5 5-5 5" stroke="#409eff" stroke-width="1.2" fill="none"/></svg>
<div class="a lnk" style="left:1602px;top:656px">更多</div>
<div class="a" style="left:242px;top:740px;width:1399px;height:1px;background:#ebeef5"></div>
<div class="a cb" style="left:256px;top:712px"></div>
<div class="a td" style="left:296px;top:710px;width:120px;text-align:center">281</div>
<div class="a td" style="left:496px;top:710px;width:120px;text-align:center">15601691305</div>
<div class="a td" style="left:629px;top:710px">用户6<span style="letter-spacing:1.2px">...</span></div>
<div class="a td" style="left:970px;top:710px;width:120px;text-align:center">0</div>
<div class="a tag" style="left:1108px;top:708px">开启</div>
<div class="a td" style="left:1170px;top:710px;width:200px;text-align:center;transform:scaleX(1.039)">2023–12–28 22:51:07</div>
<div class="a td" style="left:1350px;top:710px;width:200px;text-align:center;transform:scaleX(1.039)">2023–12–28 22:51:07</div>
<div class="a lnk" style="left:1552px;top:710px">详情</div>
<svg class="a" style="left:1589px;top:714px" width="12" height="12" viewBox="0 0 12 12"><path d="M1 1l5 5-5 5M5.5 1l5 5-5 5" stroke="#409eff" stroke-width="1.2" fill="none"/></svg>
<div class="a lnk" style="left:1602px;top:710px">更多</div>
<div class="a" style="left:242px;top:741px;width:1399px;height:63px;background:#fafafa"></div>
<div class="a" style="left:242px;top:804px;width:1399px;height:1px;background:#ebeef5"></div>
<div class="a cb" style="left:256px;top:766px"></div>
<div class="a td" style="left:296px;top:762px;width:120px;text-align:center">280</div>
<svg class="a" style="left:436px;top:750px" width="40" height="39" viewBox="0 0 40 39"><rect width="40" height="39" fill="#cdbfae"/><rect x="0" y="0" width="21" height="14" fill="#d4c8b8"/><rect x="21" y="0" width="17" height="11" fill="#8a4a2e"/><rect x="36" y="0" width="4" height="39" fill="#d2cac2"/><rect x="0" y="10" width="4" height="4" fill="#3a4658"/><path d="M0 15L12 14 17 20 0 25z" fill="#e6e2de"/><path d="M0 25L17 20 18 22 0 28z" fill="#8a7a70"/><path d="M0 28L18 22 12 32 0 36z" fill="#c8beb4"/><path d="M9 36C8 28 12 20 18 16C22 12 28 9 33 12C38 16 37 28 33 36z" fill="#7a5a3c"/><path d="M11 19C14 15 20 14 24 12C27 10 30 12 29 17C27 22 20 24 15 23C12 22 10 21 11 19z" fill="#c89a64"/><path d="M26 9C30 8 35 10 35 15C35 19 31 21 28 19C26 16 25 12 26 9z" fill="#9a7250"/><rect x="26" y="11" width="2" height="4" fill="#3a7ad8"/><path d="M0 36L9 28 16 37 40 36 40 39 0 39z" fill="#121012"/></svg>
<div class="a td" style="left:629px;top:762px">芋艿<span style="letter-spacing:1.2px">...</span></div>
<div class="a td" style="left:970px;top:762px;width:120px;text-align:center">0</div>
<div class="a tag" style="left:1108px;top:760px">开启</div>
<div class="a td" style="left:1170px;top:762px;width:200px;text-align:center;transform:scaleX(1.046)">2023–12–24 20:10:34</div>
<div class="a td" style="left:1350px;top:762px;width:200px;text-align:center;transform:scaleX(1.046)">2023–12–24 20:10:34</div>
<div class="a lnk" style="left:1552px;top:762px">详情</div>
<svg class="a" style="left:1589px;top:766px" width="12" height="12" viewBox="0 0 12 12"><path d="M1 1l5 5-5 5M5.5 1l5 5-5 5" stroke="#409eff" stroke-width="1.2" fill="none"/></svg>
<div class="a lnk" style="left:1602px;top:762px">更多</div>
<div class="a" style="left:242px;top:845px;width:1399px;height:1px;background:#ebeef5"></div>
<div class="a cb" style="left:256px;top:818px"></div>
<div class="a td" style="left:296px;top:815px;width:120px;text-align:center">279</div>
<div class="a td" style="left:629px;top:815px">用户3<span style="letter-spacing:1.2px">...</span></div>
<div class="a td" style="left:970px;top:815px;width:120px;text-align:center">0</div>
<div class="a tag" style="left:1108px;top:813px">开启</div>
<div class="a td" style="left:1170px;top:815px;width:200px;text-align:center;transform:scaleX(1.046)">2023–12–24 13:08:03</div>
<div class="a td" style="left:1350px;top:815px;width:200px;text-align:center;transform:scaleX(1.046)">2023–12–24 13:08:03</div>
<div class="a lnk" style="left:1552px;top:815px">详情</div>
<svg class="a" style="left:1589px;top:819px" width="12" height="12" viewBox="0 0 12 12"><path d="M1 1l5 5-5 5M5.5 1l5 5-5 5" stroke="#409eff" stroke-width="1.2" fill="none"/></svg>
<div class="a lnk" style="left:1602px;top:815px">更多</div>
<div class="a" style="left:242px;top:846px;width:1399px;height:42px;background:#fafafa"></div>
<div class="a" style="left:242px;top:888px;width:1399px;height:1px;background:#ebeef5"></div>
<div class="a cb" style="left:256px;top:860px"></div>
<div class="a td" style="left:296px;top:857px;width:120px;text-align:center">278</div>
<div class="a td" style="left:629px;top:857px">用户5<span style="letter-spacing:1.2px">...</span></div>
<div class="a td" style="left:970px;top:857px;width:120px;text-align:center">0</div>
<div class="a tag" style="left:1108px;top:855px">开启</div>
<div class="a td" style="left:1170px;top:857px;width:200px;text-align:center;transform:scaleX(1.024)">2023–12–24 11:48:52</div>
<div class="a td" style="left:1350px;top:857px;width:200px;text-align:center;transform:scaleX(1.024)">2023–12–24 11:48:52</div>
<div class="a lnk" style="left:1552px;top:857px">详情</div>
<svg class="a" style="left:1589px;top:861px" width="12" height="12" viewBox="0 0 12 12"><path d="M1 1l5 5-5 5M5.5 1l5 5-5 5" stroke="#409eff" stroke-width="1.2" fill="none"/></svg>
<div class="a lnk" style="left:1602px;top:857px">更多</div>
<svg class="a" style="left:436px;top:897px" width="40" height="39" viewBox="0 0 40 39"><rect width="40" height="39" fill="#cdbfae"/><rect x="0" y="0" width="21" height="14" fill="#d4c8b8"/><rect x="21" y="0" width="17" height="11" fill="#8a4a2e"/><rect x="36" y="0" width="4" height="39" fill="#d2cac2"/><rect x="0" y="10" width="4" height="4" fill="#3a4658"/><path d="M0 15L12 14 17 20 0 25z" fill="#e6e2de"/><path d="M0 25L17 20 18 22 0 28z" fill="#8a7a70"/><path d="M0 28L18 22 12 32 0 36z" fill="#c8beb4"/><path d="M9 36C8 28 12 20 18 16C22 12 28 9 33 12C38 16 37 28 33 36z" fill="#7a5a3c"/><path d="M11 19C14 15 20 14 24 12C27 10 30 12 29 17C27 22 20 24 15 23C12 22 10 21 11 19z" fill="#c89a64"/><path d="M26 9C30 8 35 10 35 15C35 19 31 21 28 19C26 16 25 12 26 9z" fill="#9a7250"/><rect x="26" y="11" width="2" height="4" fill="#3a7ad8"/><path d="M0 36L9 28 16 37 40 36 40 39 0 39z" fill="#121012"/></svg>
<div class="a" style="left:1642px;top:549px;width:12px;height:39px;border-radius:6px 0 0 6px;background:#409eff"></div>
<!-- /table -->
</body></html>
